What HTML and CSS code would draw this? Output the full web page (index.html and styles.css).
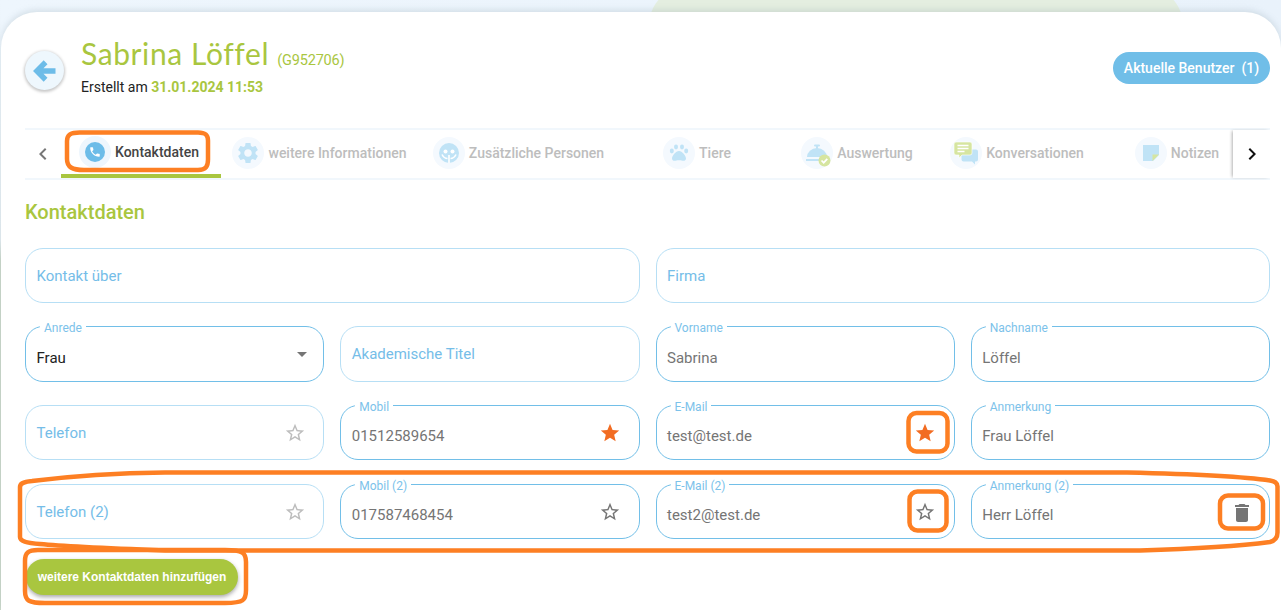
FILE: index.html
```html
<!DOCTYPE html>
<html lang="de">
<head>
<meta charset="utf-8">
<title>Sabrina Löffel</title>
<link rel="stylesheet" href="styles.css">
</head>
<body>
<div class="bg-shape"></div>
<main class="card">
  <header class="head">
    <button class="back" aria-label="Zurück">
      <svg viewBox="0 0 24 24" width="28" height="28"><path d="M21 12H6M12.5 4.5L5 12l7.5 7.5" fill="none" stroke="#6dbce8" stroke-width="4.6"/></svg>
    </button>
    <div class="head-text">
      <h1 class="name">Sabrina Löffel <small class="code">(G952706)</small></h1>
      <p class="created">Erstellt am <b>31.01.2024 11:53</b></p>
    </div>
    <button class="users">Aktuelle Benutzer&nbsp; (1)</button>
  </header>

  <nav class="tabbar">
    <div class="arrow arrow-left">
      <svg viewBox="0 0 24 24" width="24" height="24"><path d="M15.41 7.41L14 6l-6 6 6 6 1.41-1.41L10.83 12z" fill="#777"/></svg>
    </div>
    <div class="tabs">
      <div class="tab active">
        <span class="ico"><svg viewBox="0 0 32 32" width="32" height="32"><circle cx="16" cy="16" r="10" fill="#6cbce8"/><g transform="translate(9.6 9.6) scale(.53)"><path fill="#fff" d="M6.62 10.79c1.44 2.83 3.76 5.14 6.59 6.59l2.2-2.2c.27-.27.67-.36 1.02-.24 1.12.37 2.33.57 3.57.57.55 0 1 .45 1 1V20c0 .55-.45 1-1 1-9.39 0-17-7.61-17-17 0-.55.45-1 1-1h3.5c.55 0 1 .45 1 1 0 1.25.2 2.45.57 3.57.11.35.03.74-.25 1.02l-2.2 2.2z"/></g></svg></span>
        <span>Kontaktdaten</span>
      </div>
      <div class="tab tab-a">
        <span class="ico"><svg viewBox="0 0 32 32" width="32" height="32"><g transform="translate(3.4 3.4) scale(1.05)"><path fill="#c0e3f6" d="M19.14 12.94c.04-.3.06-.61.06-.94 0-.32-.02-.64-.07-.94l2.03-1.58c.18-.14.23-.41.12-.61l-1.92-3.32c-.12-.22-.37-.29-.59-.22l-2.39.96c-.5-.38-1.03-.7-1.62-.94l-.36-2.54c-.04-.24-.24-.41-.48-.41h-3.84c-.24 0-.43.17-.47.41l-.36 2.54c-.59.24-1.13.57-1.62.94l-2.39-.96c-.22-.08-.47 0-.59.22L2.74 8.87c-.12.21-.08.47.12.61l2.03 1.58c-.05.3-.09.63-.09.94s.02.64.07.94l-2.03 1.58c-.18.14-.23.41-.12.61l1.92 3.32c.12.22.37.29.59.22l2.39-.96c.5.38 1.03.7 1.62.94l.36 2.54c.05.24.24.41.48.41h3.84c.24 0 .44-.17.47-.41l.36-2.54c.59-.24 1.13-.56 1.62-.94l2.39.96c.22.08.47 0 .59-.22l1.92-3.32c.12-.22.07-.47-.12-.61l-2.01-1.58zM12 15.6c-1.98 0-3.6-1.62-3.6-3.6s1.62-3.6 3.6-3.6 3.6 1.62 3.6 3.6-1.62 3.6-3.6 3.6z"/></g></svg></span>
        <span>weitere Informationen</span>
      </div>
      <div class="tab tab-b">
        <span class="ico"><svg viewBox="0 0 32 32" width="32" height="32"><circle cx="16" cy="16" r="10" fill="#c0e3f6"/><circle cx="12.5" cy="14.5" r="2" fill="#fff"/><circle cx="19.5" cy="14.5" r="2" fill="#fff"/><path d="M9 17.500c1.500 3 3.500 4 5.500 4M23 17.500c-1.500 3-3.500 4-5.500 4M16 18v8" fill="none" stroke="#fff" stroke-width="1.600"/></svg></span>
        <span>Zusätzliche Personen</span>
      </div>
      <div class="tab">
        <span class="ico"><svg viewBox="0 0 32 32" width="32" height="32" fill="#c0e3f6"><ellipse cx="8.8" cy="14" rx="2" ry="2.4"/><ellipse cx="13" cy="10" rx="2" ry="2.4"/><ellipse cx="19" cy="10" rx="2" ry="2.4"/><ellipse cx="23.2" cy="14" rx="2" ry="2.4"/><path d="M16 14c3.2 0 7 5 7 7.6 0 2.6-2.6 2.4-4.4 2-1.700-.4-3.500-.4-5.200 0-1.800.4-4.400.6-4.400-2C9 19 12.800 14 16 14z"/></svg></span>
        <span>Tiere</span>
      </div>
      <div class="tab">
        <span class="ico"><svg viewBox="0 0 32 32" width="32" height="32"><path d="M6 20a10 9 0 0 1 20 0z" fill="#c0e3f6"/><rect x="13" y="7.500" width="6" height="2" rx="1" fill="#c0e3f6"/><rect x="15" y="8" width="2" height="4" fill="#c0e3f6"/><rect x="5" y="22" width="21" height="2" fill="#c0e3f6"/><circle cx="23.500" cy="23.500" r="6" fill="#d6e5a0"/><path d="M20.500 23.500l2.200 2.200 3.600-3.800" fill="none" stroke="#fff" stroke-width="1.700"/></svg></span>
        <span>Auswertung</span>
      </div>
      <div class="tab">
        <span class="ico"><svg viewBox="0 0 32 32" width="32" height="32"><path d="M13.500 12.500h12.500a2 2 0 0 1 2 2v8a2 2 0 0 1-2 2h-1v3l-3-3h-8.500a2 2 0 0 1-2-2v-8a2 2 0 0 1 2-2z" fill="#c0e3f6"/><path d="M6 5h14a2 2 0 0 1 2 2v9a2 2 0 0 1-2 2h-8l-3 3v-3H6a2 2 0 0 1-2-2V7a2 2 0 0 1 2-2z" fill="#d6e5a0" stroke="#fff" stroke-width=".6"/><path d="M7.500 8.500h11M7.500 11.500h11M7.500 14.500h7" stroke="#fff" stroke-width="1.300"/></svg></span>
        <span>Konversationen</span>
      </div>
      <div class="tab">
        <span class="ico"><svg viewBox="0 0 32 32" width="32" height="32"><path d="M8 8h16v10l-6 6H8z" fill="#c0e3f6"/><path d="M17.500 24v-6.500H24z" fill="#d6e5a0"/></svg></span>
        <span>Notizen</span>
      </div>
    </div>
    <div class="arrow arrow-right">
      <svg viewBox="0 0 24 24" width="24" height="24"><path d="M10 6L8.590 7.410 13.170 12l-4.580 4.590L10 18l6-6z" fill="#111"/></svg>
    </div>
  </nav>

  <h2 class="section">Kontaktdaten</h2>

  <form class="grid">
    <div class="field empty span2"><span class="ph">Kontakt über</span></div>
    <div class="field empty span2"><span class="ph">Firma</span></div>

    <div class="field">
      <span class="label">Anrede</span>
      <span class="val dark">Frau</span>
      <svg class="caret" width="10" height="5" viewBox="0 0 10 5"><path d="M0 0h10L5 5z" fill="#757575"/></svg>
    </div>
    <div class="field empty"><span class="ph">Akademische Titel</span></div>
    <div class="field"><span class="label">Vorname</span><span class="val">Sabrina</span></div>
    <div class="field"><span class="label">Nachname</span><span class="val">Löffel</span></div>

    <div class="field empty">
      <span class="ph">Telefon</span>
      <svg class="icon" viewBox="0 0 24 24"><path fill="#bdbdbd" d="M22 9.240l-7.190-.62L12 2 9.190 8.630 2 9.240l5.460 4.730L5.820 21 12 17.270 18.180 21l-1.630-7.030L22 9.240zM12 15.400l-3.760 2.270 1-4.280-3.320-2.880 4.380-.38L12 6.100l1.710 4.040 4.380.38-3.320 2.880 1 4.280L12 15.400z"/></svg>
    </div>
    <div class="field">
      <span class="label">Mobil</span><span class="val">01512589654</span>
      <svg class="icon" viewBox="0 0 24 24"><path fill="#f26c22" d="M12 17.270L18.180 21l-1.640-7.030L22 9.240l-7.190-.61L12 2 9.190 8.630 2 9.240l5.460 4.730L5.820 21z"/></svg>
    </div>
    <div class="field">
      <span class="label">E-Mail</span><span class="val">test@test.de</span>
      <svg class="icon" viewBox="0 0 24 24"><path fill="#f26c22" d="M12 17.270L18.180 21l-1.640-7.030L22 9.240l-7.190-.61L12 2 9.190 8.630 2 9.240l5.460 4.730L5.820 21z"/></svg>
    </div>
    <div class="field"><span class="label">Anmerkung</span><span class="val">Frau Löffel</span></div>

    <div class="field empty late">
      <span class="ph">Telefon (2)</span>
      <svg class="icon" viewBox="0 0 24 24"><path fill="#bdbdbd" d="M22 9.240l-7.190-.62L12 2 9.190 8.630 2 9.240l5.460 4.730L5.820 21 12 17.270 18.180 21l-1.630-7.030L22 9.240zM12 15.400l-3.760 2.270 1-4.280-3.320-2.880 4.380-.38L12 6.100l1.710 4.040 4.380.38-3.320 2.880 1 4.280L12 15.400z"/></svg>
    </div>
    <div class="field late">
      <span class="label">Mobil (2)</span><span class="val">017587468454</span>
      <svg class="icon" viewBox="0 0 24 24"><path fill="#757575" d="M22 9.240l-7.190-.62L12 2 9.190 8.630 2 9.240l5.460 4.730L5.820 21 12 17.270 18.180 21l-1.630-7.030L22 9.240zM12 15.400l-3.760 2.270 1-4.280-3.320-2.880 4.380-.38L12 6.100l1.710 4.040 4.380.38-3.320 2.880 1 4.280L12 15.400z"/></svg>
    </div>
    <div class="field late">
      <span class="label">E-Mail (2)</span><span class="val">test2@test.de</span>
      <svg class="icon" viewBox="0 0 24 24"><path fill="#757575" d="M22 9.240l-7.190-.62L12 2 9.190 8.630 2 9.240l5.460 4.730L5.820 21 12 17.270 18.180 21l-1.630-7.030L22 9.240zM12 15.400l-3.760 2.270 1-4.280-3.320-2.880 4.380-.38L12 6.100l1.710 4.040 4.380.38-3.320 2.880 1 4.280L12 15.400z"/></svg>
    </div>
    <div class="field late">
      <span class="label">Anmerkung (2)</span><span class="val">Herr Löffel</span>
      <svg class="icon trash" viewBox="0 0 24 24"><path fill="#757575" d="M6 19c0 1.100.9 2 2 2h8c1.100 0 2-.9 2-2V7H6v12zM19 4h-3.500l-1-1h-5l-1 1H5v2h14V4z"/></svg>
    </div>
  </form>

  <button class="add">weitere Kontaktdaten hinzufügen</button>
</main>

<svg class="marks" width="1281" height="610" viewBox="0 0 1281 610" fill="none" stroke="#fd7f23" stroke-width="4.500">
  <path d="M82 132.500H198c8 0 10 3 10 8v19c0 7-2 10-10 10.500H84c-12 0-17-3-17-11v-18c0-6 3-9 15-8.500z"/>
  <path d="M165 472.500H1127C1190 474 1240 476 1270 480.500c5 1 7 2 7.500 6v46c0 5-2 8-7.500 9.500-30 4-80 7-130 8.500H165C100 548 60 546 40 544c-14-1-20-3-20-7V487c0-3 2-5 12-6 40-5 90-8 133-8.500z"/>
  <path d="M38 550H225c18 0 21 3 21 12v28c0 10-2 13-21 13H45c-16 0-20-2-20-12v-30c0-8 3-11 13-11z"/>
  <rect x="908.500" y="413" width="39" height="38.500" rx="8"/>
  <rect x="909.500" y="491.500" width="37" height="39" rx="8"/>
  <rect x="1220" y="495.500" width="43" height="33" rx="8"/>
</svg>
</body>
</html>
```
FILE: styles.css
```css
* { box-sizing: border-box; }
html, body { margin: 0; height: 100%; overflow: hidden; }
body {
  position: relative;
  width: 1281px;
  height: 610px;
  background:
    linear-gradient(180deg, #eef6fd 0, #e6eff3 240px, #ccd9cb 260px, #ccd9cb 100%) left top / 1px 100% no-repeat,
    linear-gradient(90deg, #eef6fd 0%, #e9f2fb 100%);
  font-family: Roboto, sans-serif;
  padding: 12px 0 0 1px;
}
.bg-shape {
  position: absolute;
  left: 650px;
  top: -60px;
  width: 532px;
  height: 160px;
  border-radius: 50%;
  background: #e4eee0;
}
.card {
  position: relative;
  height: 598px;
  background: #fff;
  border-radius: 36px 36px 0 0;
  box-shadow: 0 -2px 6px rgba(120, 140, 150, .22);
  padding: 0 11px 0 24px;
  display: flex;
  flex-direction: column;
}
.head {
  display: flex;
  align-items: flex-start;
  height: 116px;
}
.back {
  width: 39px;
  height: 39px;
  margin-top: 39px;
  flex: none;
  border: 0;
  padding: 0;
  border-radius: 50%;
  background: #eef7fd;
  box-shadow: 0 1px 3px 1px rgba(0, 0, 0, .22);
  display: flex;
  align-items: center;
  justify-content: center;
}
.head-text { margin-left: 17px; padding-top: 24px; }
.name {
  margin: 0;
  font: 400 30px/34px Lato, sans-serif;
  letter-spacing: .6px;
  color: #a9c63f;
}
.code {
  font: 400 14.500px Roboto, sans-serif;
  letter-spacing: -.2px;
}
.created {
  margin: 8px 0 0;
  font-size: 14px;
  line-height: 18px;
  color: #222;
}
.created b { color: #a9c63f; font-weight: 700; }
.users {
  margin: 40px 0 0 auto;
  width: 157px;
  height: 32px;
  border: 0;
  padding: 0;
  border-radius: 16px;
  background: #70bee8;
  color: #fff;
  font: 500 14px Roboto, sans-serif;
}
.tabbar {
  display: flex;
  height: 52px;
  border-top: 2px solid #f1f7fc;
  border-bottom: 2px solid #f1f7fc;
}
.arrow {
  width: 37px;
  flex: none;
  display: flex;
  align-items: center;
  justify-content: center;
}
.arrow-left { width: 36px; }
.arrow-right { box-shadow: -2px 0 3px -1px rgba(0, 0, 0, .3); position: relative; background: #fff; }
.tabs {
  flex: 1;
  min-width: 0;
  display: flex;
  overflow: hidden;
}
.tab {
  flex: 0 0 160px;
  height: 48px;
  display: flex;
  align-items: center;
  justify-content: center;
  gap: 4px;
  font-size: 14px;
  font-weight: 500;
  color: #bdbdbd;
  padding-bottom: 2px;
}
.tab-a { flex-basis: 197px; }
.tab-b { flex-basis: 199px; padding-left: 2px; }
.tab.active {
  color: #444;
  border-bottom: 4px solid #a9c63f;
  padding: 0 4px 0 0;
}
.ico {
  width: 32px;
  height: 32px;
  border-radius: 50%;
  background: #f4f9fe;
  flex: none;
}
.ico svg { display: block; overflow: visible; }
.active .ico { background: #eef6fd; }
.section {
  margin: 21px 0 0;
  font-size: 20px;
  line-height: 22px;
  font-weight: 500;
  color: #a9c63f;
}
.grid {
  margin-top: 25px;
  display: grid;
  grid-template-columns: repeat(4, 1fr);
  grid-template-rows: 55px 56px 55px 56px;
  gap: 23px 16px;
}
.span2 { grid-column: span 2; }
.late { margin-top: 1px; }
.field {
  position: relative;
  display: flex;
  align-items: center;
  justify-content: space-between;
  padding: 0 17.500px 0 10.500px;
  border: 1px solid #72bfe8;
  border-radius: 18px;
  font-size: 15px;
}
.field.empty { border-color: #b7dff5; }
.label {
  position: absolute;
  top: -5px;
  left: 14px;
  padding: 0 4px;
  background: #fff;
  font-size: 12px;
  line-height: 12px;
  color: #7cc2ea;
}
.ph { color: #75bde8; }
.val { padding-top: 7px; color: #757575; }
.val.dark { color: #222; }
.caret { margin: 0 -1.500px 0 0; }
.icon { width: 22px; height: 22px; flex: none; margin-top: 1px; }
.trash { width: 24px; height: 24px; margin-right: -2px; margin-top: 3px; }
.add {
  margin: 20px 0 0 1px;
  width: 212px;
  height: 36px;
  border: 0;
  padding: 0;
  border-radius: 18px;
  background: #a9c63f;
  color: #fff;
  font: 700 12px "Liberation Sans", Arial, sans-serif;
  box-shadow: 0 2px 4px rgba(0, 0, 0, .35);
}
.marks {
  position: absolute;
  left: 0;
  top: 0;
  pointer-events: none;
}
```
